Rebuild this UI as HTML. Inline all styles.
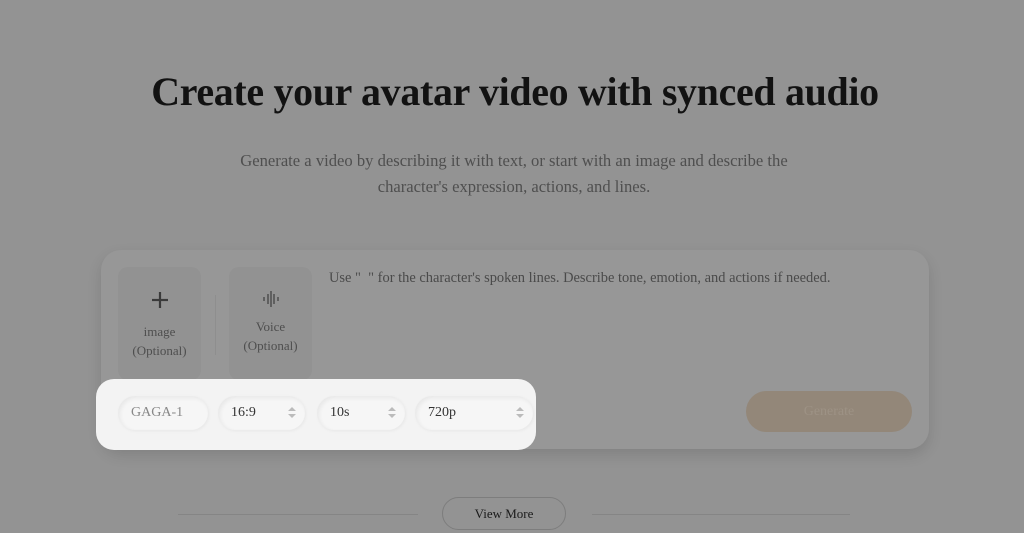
<!DOCTYPE html>
<html><head><style>
body{margin:0;width:1024px;height:533px;background:#939393;font-family:"Liberation Serif",serif;position:relative;overflow:hidden}
.a{position:absolute}
h1{position:absolute;left:3px;width:1024px;top:68px;margin:0;text-align:center;font-size:39.9px;font-weight:bold;color:#121212;letter-spacing:-0.3px}
.sub{left:2px;width:1024px;top:148px;text-align:center;font-size:16.6px;line-height:26px;color:#4f4f4f}
.card{left:101px;top:250px;width:828px;height:199px;background:#979797;border-radius:20px;box-shadow:0 6px 14px rgba(0,0,0,.12)}
.tile{top:267px;width:83px;height:113px;background:#929292;border-radius:10px;text-align:center;color:#4e4e4e;font-size:13px;line-height:19px}
.hl{left:96px;top:379px;width:440px;height:71px;background:#f3f3f3;border-radius:18px}
.pill{top:396px;height:34px;background:#f6f6f6;border-radius:17px;box-shadow:inset 2px 2px 4px rgba(0,0,0,.06),1px 1px 3px rgba(0,0,0,.05);font-size:14px;line-height:34px;color:#333;box-sizing:border-box;padding-left:13px}
.arr{position:absolute;right:13px;top:12px;width:0;height:0}
.arr:before{content:"";position:absolute;left:-4px;top:-1px;border:4px solid transparent;border-bottom:4px solid #bbb;border-top:0}
.arr:after{content:"";position:absolute;left:-4px;top:6px;border:4px solid transparent;border-top:4px solid #bbb;border-bottom:0}
</style></head><body>
<h1>Create your avatar video with synced audio</h1>
<div class="a sub">Generate a video by describing it with text, or start with an image and describe the<br>character's expression, actions, and lines.</div>
<div class="a card"></div>
<div class="a tile" style="left:118px"><svg width="18" height="18" style="margin-top:24px" stroke="#3a3a3a" stroke-width="2.2"><line x1="9" y1="1" x2="9" y2="17"/><line x1="1" y1="9" x2="17" y2="9"/></svg><div style="margin-top:8px">image<br>(Optional)</div></div>
<div class="a" style="left:215px;top:295px;width:1px;height:60px;background:#8e8e8e"></div>
<div class="a tile" style="left:229px"><svg width="20" height="18" style="margin-top:23px" stroke="#444" stroke-width="1.3"><line x1="3" y1="7" x2="3" y2="11"/><line x1="7" y1="4" x2="7" y2="14"/><line x1="10" y1="1" x2="10" y2="17"/><line x1="13" y1="4" x2="13" y2="14"/><line x1="17" y1="7" x2="17" y2="11"/></svg><div style="margin-top:4px">Voice<br>(Optional)</div></div>
<div class="a" style="left:329px;top:270px;font-size:14.45px;color:#4a4a4a">Use "&nbsp;&nbsp;" for the character's spoken lines. Describe tone, emotion, and actions if needed.</div>
<div class="a" style="left:746px;top:391px;width:166px;height:41px;border-radius:21px;background:#938779;color:#9d9285;font-size:14px;line-height:41px;text-align:center">Generate</div>
<div class="a hl"></div>
<div class="a pill" style="left:118px;width:90px;color:#888">GAGA-1</div>
<div class="a pill" style="left:218px;width:87px">16:9<span class="arr"></span></div>
<div class="a pill" style="left:317px;width:88px">10s<span class="arr"></span></div>
<div class="a pill" style="left:415px;width:118px">720p<span class="arr"></span></div>
<div class="a" style="left:178px;top:514px;width:240px;height:1px;background:#858585"></div>
<div class="a" style="left:592px;top:514px;width:258px;height:1px;background:#858585"></div>
<div class="a" style="left:442px;top:497px;width:122px;height:31px;border:1px solid #7d7d7d;border-radius:17px;text-align:center;line-height:31px;font-size:13px;color:#1a1a1a">View More</div>
</body></html>
